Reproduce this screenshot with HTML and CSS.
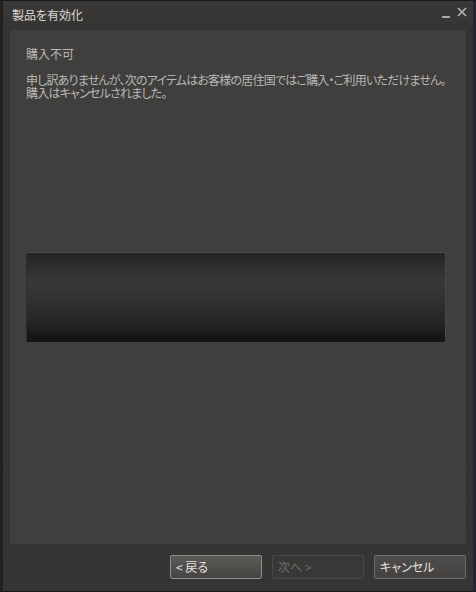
FILE: index.html
```html
<!DOCTYPE html>
<html lang="ja">
<head>
<meta charset="utf-8">
<link rel="stylesheet" href="styles.css">
</head>
<body>
<div class="window">
  <div class="titlebar">
    <span class="title">製品を有効化</span>
    <div class="controls">
      <span class="min"></span>
      <svg class="close" width="10" height="10" viewBox="0 0 10 10"><path d="M1 1 L9 9 M9 1 L1 9" stroke="#b8b6b3" stroke-width="1.6" fill="none"/></svg>
    </div>
  </div>
  <div class="panel">
    <p class="heading">購入不可</p>
    <p class="msg">申し訳ありませんが、次のアイテムはお客様の居住国ではご購入・ご利用いただけません。<br>購入はキャンセルされました。</p>
    <div class="bar"></div>
  </div>
  <div class="footer">
    <button class="btn active">&lt; 戻る</button>
    <button class="btn disabled">次へ &gt;</button>
    <button class="btn">キャンセル</button>
  </div>
</div>
</body>
</html>
```
FILE: styles.css
```css
html, body {
  margin: 0;
  padding: 0;
  background: #1e1e1e;
}
body {
  font-family: "Noto Sans CJK JP", "Noto Sans", sans-serif;
  font-feature-settings: "palt";
}
.window {
  width: 476px;
  height: 592px;
  box-sizing: border-box;
  border: 1px solid #1a1a1a;
  border-left: 3px solid #222120;
  border-right: 3px solid #262530;
  background: linear-gradient(#353432, #353432 60%, #363533);
  display: flex;
  flex-direction: column;
}
.titlebar {
  height: 29px;
  display: flex;
  align-items: center;
  justify-content: space-between;
  padding: 0 6px 0 9px;
  background: linear-gradient(#3a3937, #353432);
}
.title {
  font-size: 12px;
  color: #dcdad7;
  margin-top: -2px;
}
.controls {
  display: flex;
  align-items: flex-start;
  gap: 7px;
  margin-top: -6px;
}
.min {
  width: 8px;
  height: 2px;
  background: #a8a6a3;
  margin-top: 9px;
}
.close {
  display: block;
}
.panel {
  margin: 0 7px 0 7px;
  height: 514px;
  box-sizing: border-box;
  background: #403f3d;
  padding: 17px 20px 0 16px;
}
.heading {
  margin: 0;
  font-size: 12px;
  line-height: 14px;
  color: #b9b8b6;
}
.msg {
  margin: 12px 0 0 0;
  font-size: 12px;
  line-height: 13px;
  color: #b9b8b6;
  letter-spacing: -0.8px;
  white-space: nowrap;
}
.bar {
  margin-top: 153px;
  height: 90px;
  box-sizing: border-box;
  border-top: 1px solid #4c4b49;
  border-left: 1px solid #2f2e2d;
  border-right: 1px solid #4a4947;
  background: linear-gradient(#252423 0%, #2d2c2b 12%, #3a3937 35%, #2e2d2c 60%, #252423 80%, #1f1e1d 88%, #161615 92%, #151514 100%);
}
.footer {
  flex: 1;
  display: flex;
  justify-content: flex-end;
  align-items: flex-start;
  gap: 10px;
  padding: 11px 7px 0 0;
}
.btn {
  width: 92px;
  height: 24px;
  box-sizing: border-box;
  font-family: "Noto Sans CJK JP", "Noto Sans", sans-serif;
  font-feature-settings: "palt";
  font-size: 12px;
  text-align: left;
  padding: 0 0 2px 5px;
  border-radius: 2px;
  border: 1px solid #6f6d6a;
  background: linear-gradient(#4f4d4b, #434240);
  color: #e4e2df;
}
.btn.active {
  border-color: #8f8d8a;
  background: linear-gradient(#5c5a57, #464442);
}
.btn.disabled {
  border-color: #4a4947;
  background: #393836;
  color: #706e6b;
}
```
